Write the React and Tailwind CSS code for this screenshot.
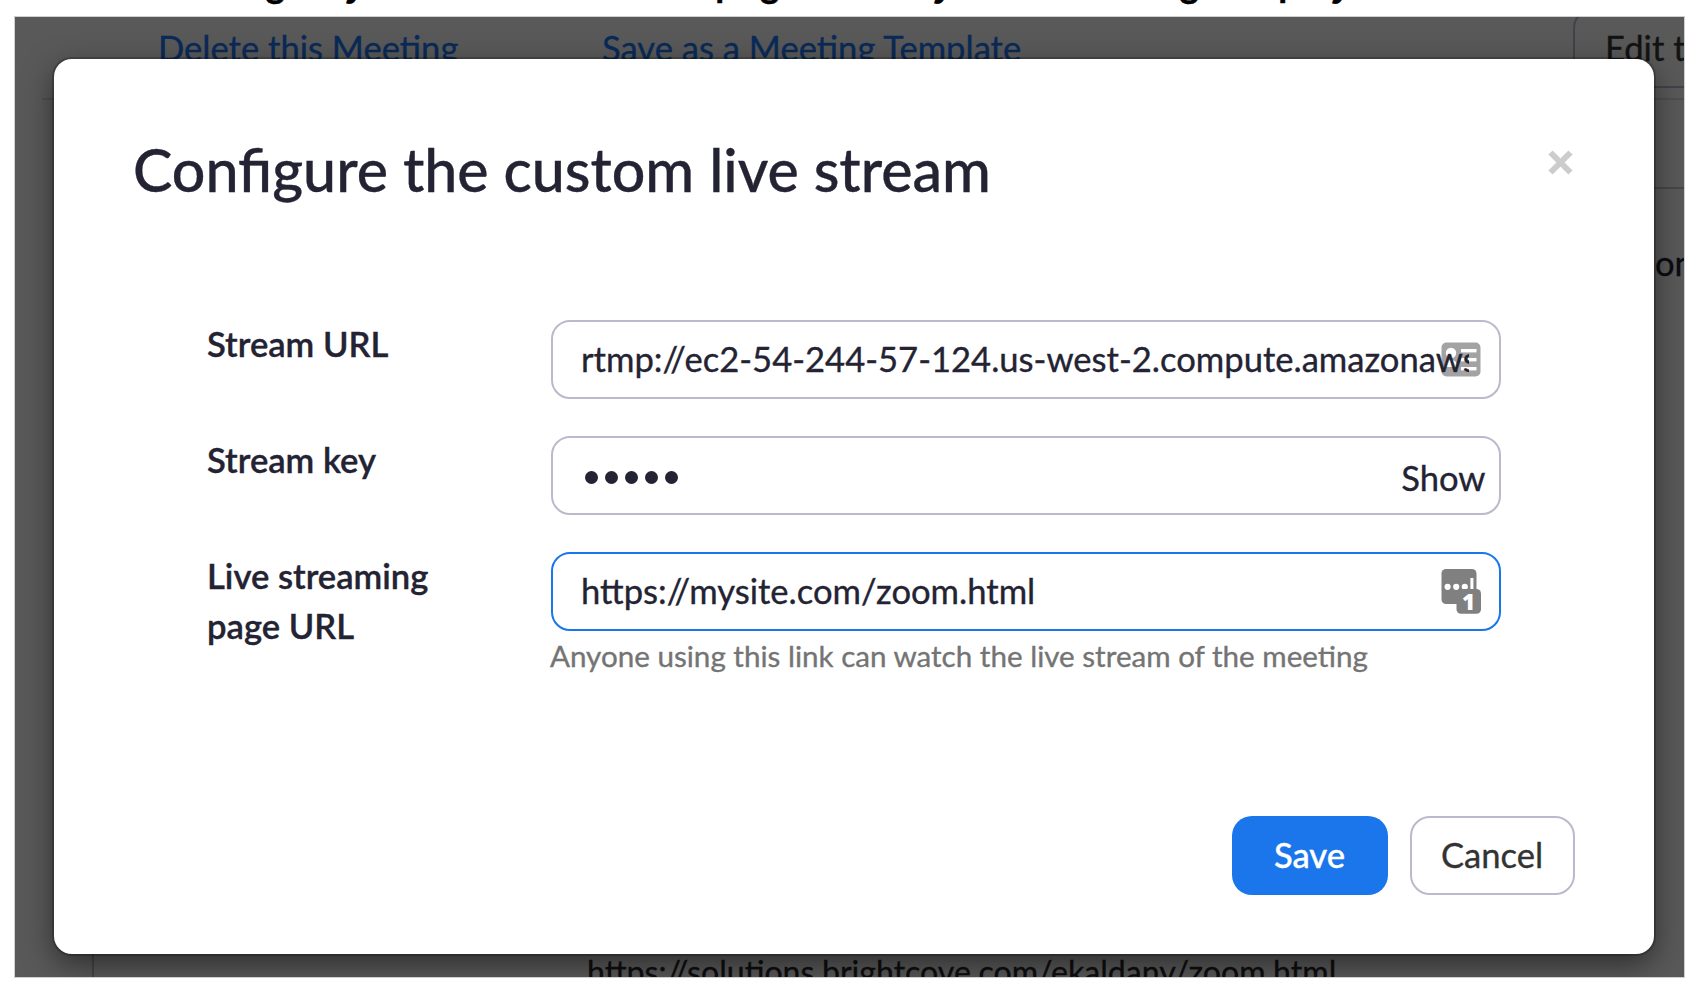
import React from 'react';

function Field({ label, focus, hint, children }) {
  return (
    <div className="flex min-h-[116.2px]">
      <div className="w-[344px] shrink-0 pt-px pr-20 -mt-0.5 text-[34.6px] leading-[49.6px] font-semibold">{label}</div>
      <div className="w-[949.5px]">
        <div
          className={`flex h-[79px] items-center justify-between rounded-[19px] border-2 pr-[14px] pl-7 text-[34.6px] leading-[42px] ${focus ? 'border-[#1a76ea]' : 'border-[#babacc]'}`}
        >
          {children}
        </div>
        {hint && <p className="mt-0.5 -ml-px text-[29.6px] leading-[46px] whitespace-nowrap text-[#747474]">{hint}</p>}
      </div>
    </div>
  );
}

function CardIcon() {
  return (
    <svg className="-ml-7 h-[35px] w-10 shrink-0" viewBox="0 0 40 35">
      <rect x="0.5" y="0.5" width="39" height="34" rx="5" fill="#a3a3a3" />
      <g fill="#fff">
        <circle cx="10" cy="11" r="5.2" />
        <path d="M3.5 25 C4 19 7 18 10 18 C13 18 16 19 16.5 25 Z" />
        <rect x="20" y="7" width="15.5" height="3.4" />
        <rect x="20" y="16" width="15.5" height="3.4" />
        <rect x="20" y="25" width="15.5" height="3.4" />
      </g>
    </svg>
  );
}

function KeyIcon() {
  return (
    <svg className="mr-1 h-[45px] w-10 shrink-0" viewBox="0 0 40 45">
      <rect x="0.5" y="0" width="35" height="35" rx="4.5" fill="#808080" />
      <circle cx="6.6" cy="17.8" r="3.1" fill="#fff" />
      <circle cx="15.2" cy="17.8" r="3.1" fill="#fff" />
      <circle cx="23.8" cy="17.8" r="3.1" fill="#fff" />
      <rect x="29.4" y="9" width="3" height="12" fill="#fff" />
      <rect x="15.5" y="20" width="24.5" height="24.7" rx="4.5" fill="#808080" />
      <text x="27.5" y="41" textAnchor="middle" fill="#fff" fontFamily="Open Sans, sans-serif" fontWeight="800" fontSize="22.5">1</text>
    </svg>
  );
}

function DimmedPage() {
  return (
    <div className="flex h-full flex-col text-[34.6px] leading-[40px] whitespace-nowrap">
      <div className="flex h-[81px] shrink-0 pl-[143px]">
        <span className="w-[444px] shrink-0 pt-[11px] text-[#0a2a57]">Delete this Meeting</span>
        <span className="w-[971px] shrink-0 pt-[11px] text-[#0a2a57]">Save as a Meeting Template</span>
        <div className="-mt-2 h-[79px] w-[340px] shrink-0 rounded-[19px] border-2 border-[#42424a] pt-[17px] pl-[30px] text-[#131313]">
          Edit this Meeting
        </div>
      </div>
      <div className="ml-[27px] flex h-[91px] shrink-0 justify-end border-t-2 border-[#4f4f4f]">
        <div className="w-[60px] border-b-2 border-[#474747]" />
      </div>
      <div className="flex h-[710px] shrink-0 justify-end pt-[54px] text-[#0b0b10]">
        <span className="w-[28.5px]">on</span>
      </div>
      <div className="ml-[77px] grow border-l-2 border-[#464646] pt-[53px] pl-[493px] text-[32.1px] text-[#0e0e10]">
        https://solutions.brightcove.com/ekaldany/zoom.html
      </div>
    </div>
  );
}

function Dialog() {
  return (
    <div className="absolute top-[42px] left-[39px] flex h-[895px] w-[1600px] flex-col rounded-[18px] bg-white pr-[79.5px] pb-[59px] pl-20 shadow-[0_0_0_2px_rgba(0,0,0,0.2),0_10px_30px_rgba(0,0,0,0.5)]">
      <div className="flex h-[261px] shrink-0 justify-between pt-[76px]">
        <h1 className="-ml-px text-[59.1px] leading-[69px] font-medium">Configure the custom live stream</h1>
        <svg className="mt-[15px] mr-[1.5px] h-[25px] w-[25px]" viewBox="0 0 25 25">
          <path d="M2.5 2.5 L22.5 22.5 M22.5 2.5 L2.5 22.5" stroke="#ccc" strokeWidth="6" />
        </svg>
      </div>
      <div className="flex grow flex-col pl-[73px]">
        <Field label="Stream URL">
          <span className="relative z-10 w-[888px] shrink-0 overflow-hidden pb-px whitespace-nowrap">
            rtmp://ec2-54-244-57-124.us-west-2.compute.amazonaws
          </span>
          <CardIcon />
          <span className="w-[5px] shrink-0" />
        </Field>
        <Field label="Stream key">
          <span className="flex gap-[6.6px] pt-1 pl-[3.5px]">
            <i className="size-[13.5px] rounded-full bg-[#232333]" />
            <i className="size-[13.5px] rounded-full bg-[#232333]" />
            <i className="size-[13.5px] rounded-full bg-[#232333]" />
            <i className="size-[13.5px] rounded-full bg-[#232333]" />
            <i className="size-[13.5px] rounded-full bg-[#232333]" />
          </span>
          <span className="-mr-px pt-1">Show</span>
        </Field>
        <Field label="Live streaming page URL" focus hint="Anyone using this link can watch the live stream of the meeting">
          <span className="pb-0.5">https://mysite.com/zoom.html</span>
          <KeyIcon />
        </Field>
      </div>
      <div className="flex justify-end gap-[22px] text-[34.6px]">
        <button className="h-[79px] w-[156px] rounded-[20px] bg-[#1a76ea] pb-px font-medium text-white">Save</button>
        <button className="h-[79px] w-[165px] rounded-[20px] border-2 border-[#babacc] pb-px text-[#333]">Cancel</button>
      </div>
    </div>
  );
}

export default function App() {
  return (
    <div className="h-[988px] w-[1700px] overflow-hidden bg-white font-[Lato,sans-serif] text-[#232333] [-webkit-text-stroke:0.35px_currentColor]">
      <div className="flex h-[17px] items-end overflow-hidden pb-[16px] pl-[264px] font-[Inter,sans-serif] text-[36px] leading-[36px] font-semibold text-black">
        <span className="w-[80px]">g</span>
        <span className="w-[371px]">y</span>
        <span className="w-[217px]">pag</span>
        <span className="w-[246px]">y</span>
        <span className="w-[100px]">g</span>
        <span>play</span>
      </div>
      <div className="relative ml-[15px] h-[959.5px] w-[1668.5px] overflow-hidden bg-[#595959] ring-1 ring-[#cfcfcf]">
        <DimmedPage />
        <Dialog />
      </div>
    </div>
  );
}
